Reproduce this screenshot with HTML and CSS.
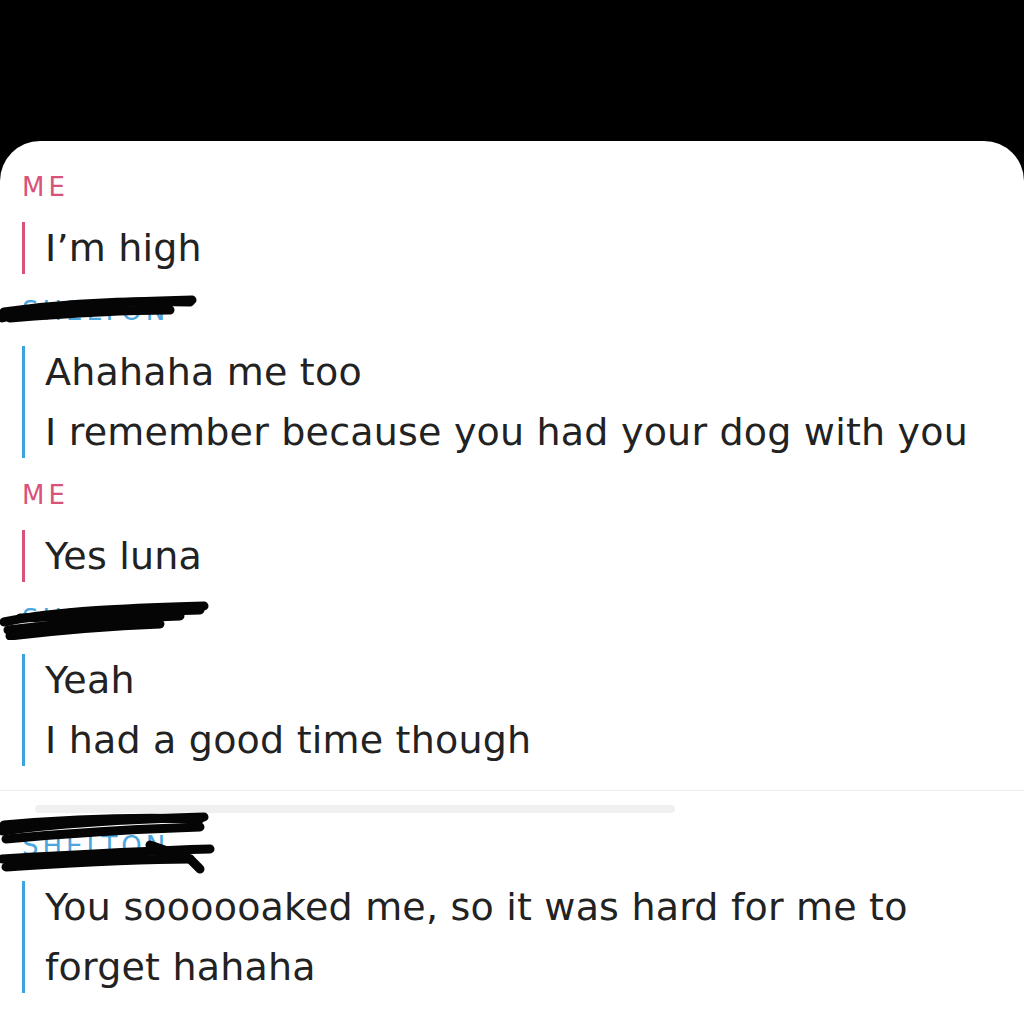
FILE: index.html
```html
<!DOCTYPE html>
<html lang="en">
<head>
  <meta charset="UTF-8">
  <meta name="viewport" content="width=device-width, initial-scale=1.0">
  <title>Chat</title>
  <link rel="stylesheet" href="styles.css">
</head>
<body>
  <div class="top"></div>
  <div class="card">
    <div class="block">
      <div class="label me">ME</div>
      <div class="msg me">
        <div class="line">I’m high</div>
      </div>
    </div>

    <div class="block">
      <div class="label them">
        SHELTON
        <svg class="scribble" width="220" height="40" viewBox="0 0 220 40">
          <path d="M2 30 C40 20 100 14 192 12" />
          <path d="M4 24 C60 16 120 12 190 14" />
          <path d="M10 30 C60 26 120 22 170 22" />
        </svg>
      </div>
      <div class="msg them">
        <div class="line">Ahahaha me too</div>
        <div class="line">I remember because you had your dog with you</div>
      </div>
    </div>

    <div class="block">
      <div class="label me">ME</div>
      <div class="msg me">
        <div class="line">Yes luna</div>
      </div>
    </div>

    <div class="block">
      <div class="label them">
        SHELTON
        <svg class="scribble" width="230" height="44" viewBox="0 0 230 44">
          <path d="M4 26 C60 14 140 12 204 10" />
          <path d="M8 34 C60 28 120 22 180 20" />
          <path d="M10 40 C60 34 110 30 160 28" />
          <path d="M20 22 C80 20 140 16 200 14" />
        </svg>
      </div>
      <div class="msg them">
        <div class="line">Yeah</div>
        <div class="line">I had a good time though</div>
      </div>
    </div>

    <div class="divider"></div>

    <div class="block last">
      <div class="faint"></div>
      <div class="label them">
        SHELTON
        <svg class="scribble big" width="230" height="66" viewBox="0 0 230 66">
          <path d="M2 22 C60 14 130 10 204 8" />
          <path d="M4 16 C70 10 140 8 200 10" />
          <path d="M6 30 C70 24 140 20 200 18" />
          <path d="M2 50 C70 46 140 42 210 40" />
          <path d="M6 58 C70 54 130 50 190 50" />
          <path d="M150 36 L190 50 L200 60" />
        </svg>
      </div>
      <div class="msg them">
        <div class="line">You soooooaked me, so it was hard for me to</div>
        <div class="line">forget hahaha</div>
      </div>
    </div>
  </div>
</body>
</html>
```

FILE: styles.css
```css
body {
  margin: 0;
  background: #000;
  font-family: "DejaVu Sans", "Open Sans", sans-serif;
  color: #222;
}
.top {
  height: 141px;
}
.card {
  background: #fff;
  border-radius: 40px 40px 0 0;
  padding: 31px 0 40px 22px;
  min-height: 850px;
  box-sizing: border-box;
}
.block {
  margin-top: 22px;
}
.block:first-child {
  margin-top: 0;
}
.label {
  position: relative;
  font-size: 26px;
  line-height: 30px;
  letter-spacing: 4px;
  margin-bottom: 20px;
}
.label.me {
  color: #d8527a;
}
.label.them {
  color: #4aa6dc;
}
.scribble {
  position: absolute;
  left: -22px;
  top: -8px;
}
.scribble.big {
  top: -22px;
}
.scribble path {
  fill: none;
  stroke: #050505;
  stroke-width: 9;
  stroke-linecap: round;
}
.msg {
  display: flex;
  flex-direction: column;
  gap: 8px;
  border-left: 3px solid;
  padding-left: 20px;
  font-size: 38px;
  letter-spacing: 0.2px;
}
.msg.me {
  border-color: #d8527a;
}
.msg.them {
  border-color: #3ea4de;
}
.line {
  line-height: 52px;
}
.divider {
  height: 1px;
  background: #ececec;
  margin: 24px 0 0 -22px;
}
.block.last {
  margin-top: 14px;
}
.faint {
  width: 640px;
  height: 8px;
  margin-left: 13px;
  margin-bottom: 18px;
  border-radius: 4px;
  background: #f0f0f0;
}
```
